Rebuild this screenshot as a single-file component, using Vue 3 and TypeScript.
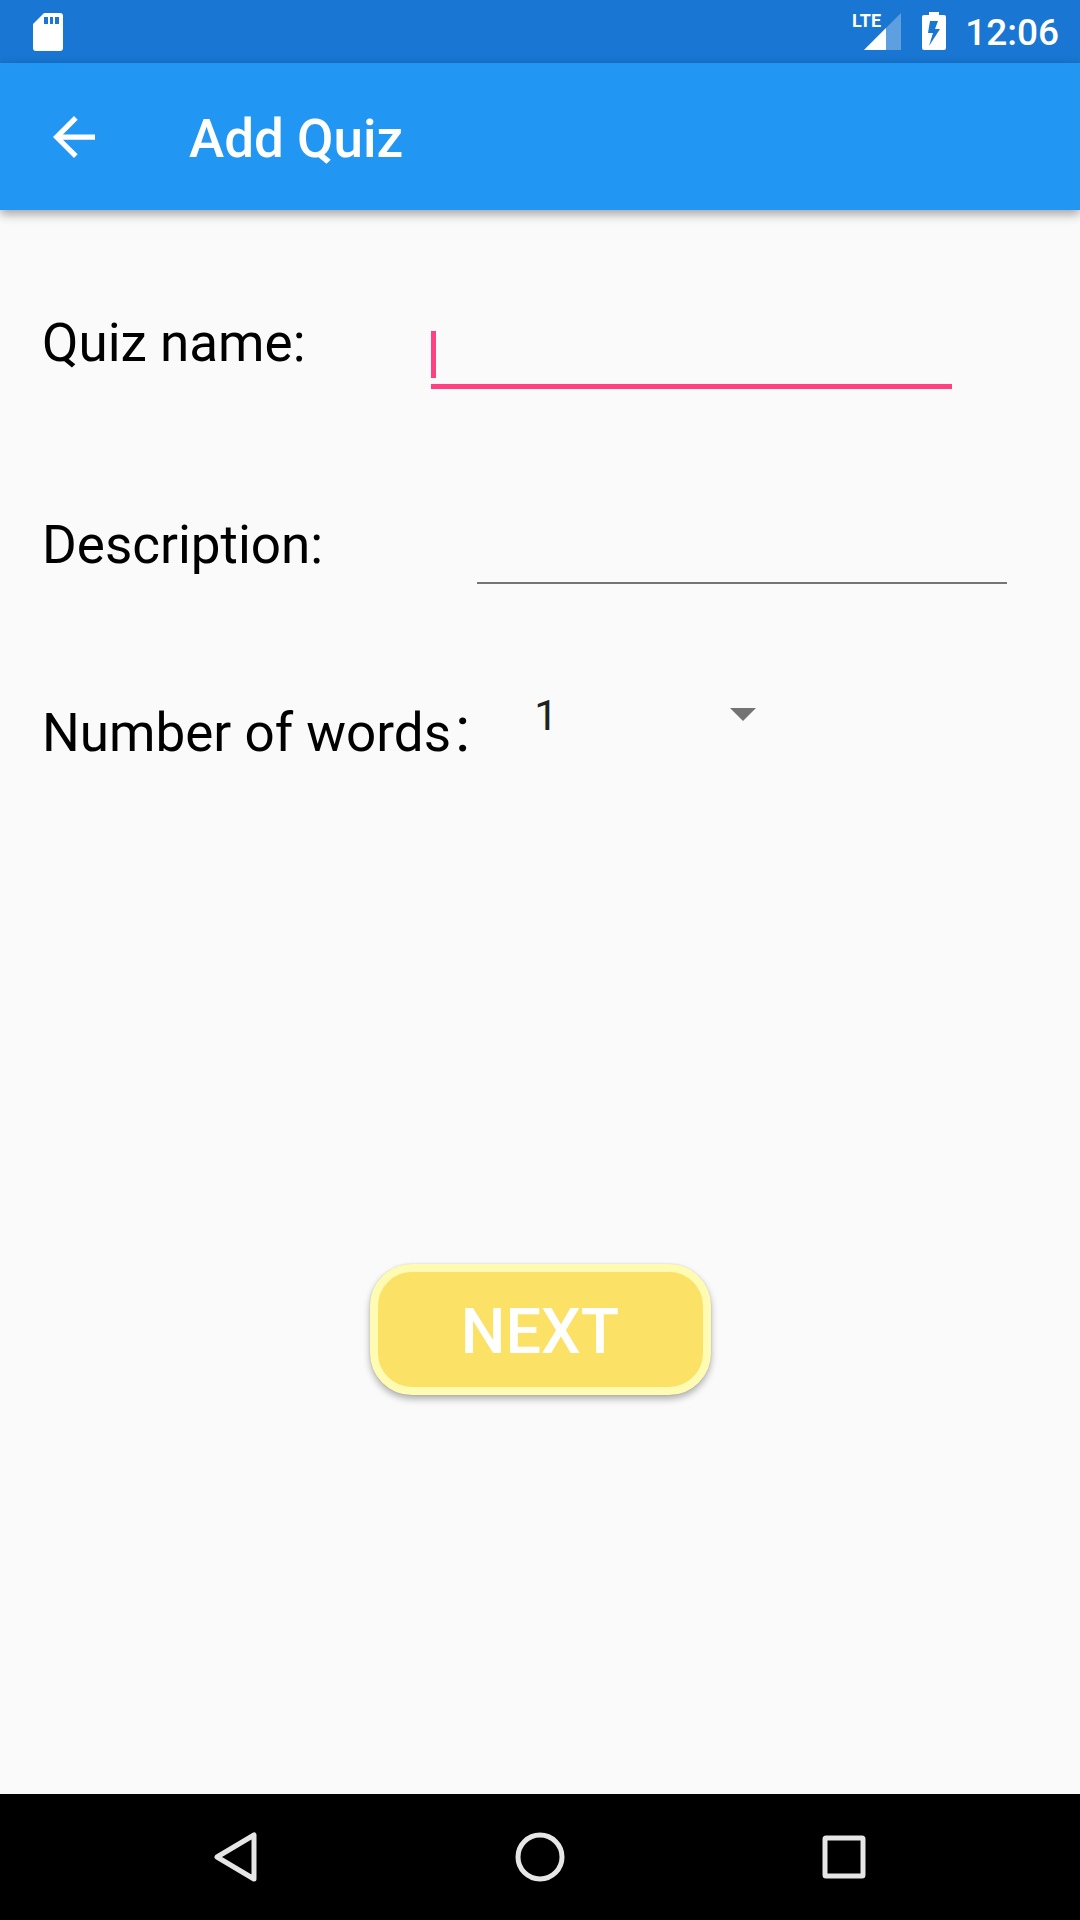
<script setup lang="ts">
import { ref } from 'vue'

const quizName = ref('')
const description = ref('')
const wordCount = ref(1)
const counts = [1, 2, 3, 4, 5, 6, 7, 8, 9, 10]
</script>

<template>
  <div class="screen">
    <div class="status">
      <svg class="sd" viewBox="0 0 32 40" aria-hidden="true">
        <path fill="#fff" fill-rule="evenodd" d="M12 1H28a3 3 0 0 1 3 3V36a3 3 0 0 1-3 3H4a3 3 0 0 1-3-3V12ZM12 5v7h4V5ZM18 5v7h3V5ZM23 5v7h4V5Z" />
      </svg>
      <div class="status-right">
        <div class="signal">
          <svg viewBox="0 0 37 37" aria-hidden="true">
            <path fill="#fff" fill-opacity=".3" d="M37 0V37H0Z" />
            <path fill="#fff" d="M22 15V37H0Z" />
          </svg>
          <span class="lte">LTE</span>
        </div>
        <svg class="battery" viewBox="0 0 24 38" aria-hidden="true">
          <path fill="#fff" fill-rule="evenodd" d="M7 0H17V3H22a2 2 0 0 1 2 2V36a2 2 0 0 1-2 2H2a2 2 0 0 1-2-2V5a2 2 0 0 1 2-2H7ZM8 9L6 21H11L7 34L18 17H13L16 9Z" />
        </svg>
        <time class="clock">12:06</time>
      </div>
    </div>

    <header class="appbar">
      <button class="back" type="button" aria-label="Back">
        <svg viewBox="0 0 16 16" aria-hidden="true">
          <path fill="#fff" d="M16 7H3.8L9.4 1.4 8 0 0 8 8 16 9.4 14.6 3.8 9H16Z" />
        </svg>
      </button>
      <h1>Add Quiz</h1>
    </header>

    <form class="form" @submit.prevent>
      <div class="row row-name">
        <label for="quiz-name">Quiz name:</label>
        <div class="field field-active">
          <input id="quiz-name" v-model="quizName" type="text" />
          <span class="caret"></span>
        </div>
      </div>
      <div class="row row-description">
        <label for="description">Description:</label>
        <div class="field">
          <input id="description" v-model="description" type="text" />
        </div>
      </div>
      <div class="row row-words">
        <label for="words">Number of words<span class="colon">:</span></label>
        <div class="picker">
          <select id="words" v-model="wordCount">
            <option v-for="n in counts" :key="n" :value="n">{{ n }}</option>
          </select>
          <svg class="arrow" viewBox="0 0 26 13" aria-hidden="true"><path fill="#737373" d="M0 0H26L13 13Z" /></svg>
        </div>
      </div>
      <button class="next" type="submit">NEXT</button>
    </form>

    <nav class="navbar">
      <button type="button" aria-label="Back">
        <svg viewBox="0 0 54 54" aria-hidden="true"><path d="M45 5V49L8 27Z" /></svg>
      </button>
      <button type="button" aria-label="Home">
        <svg viewBox="0 0 54 54" aria-hidden="true"><circle cx="27" cy="27" r="22" /></svg>
      </button>
      <button type="button" aria-label="Recent apps">
        <svg viewBox="0 0 54 54" aria-hidden="true"><rect x="8" y="8" width="38" height="38" rx="1" /></svg>
      </button>
    </nav>
  </div>
</template>

<style>
body {
  background: #fafafa;
}
</style>

<style scoped>
.screen {
  display: flex;
  flex-direction: column;
  min-height: 100vh;
  background: #fafafa;
  font-family: Roboto, "Liberation Sans", sans-serif;
  color: #000;
}

svg {
  display: block;
}

button {
  padding: 0;
  border: 0;
  background: none;
  font-family: inherit;
}

.status {
  display: flex;
  justify-content: space-between;
  height: 63px;
  padding: 0 21px 0 32px;
  background: #1976d2;
  color: #fff;
}

.sd {
  width: 32px;
  height: 40px;
  margin-top: 12px;
}

.status-right {
  display: flex;
}

.signal {
  position: relative;
  margin-top: 13px;
}

.signal svg {
  width: 37px;
  height: 37px;
}

.lte {
  position: absolute;
  top: 0;
  right: 20px;
  font-family: "Liberation Sans Narrow", Roboto, sans-serif;
  font-size: 18px;
  font-weight: 700;
  line-height: 16px;
}

.battery {
  width: 24px;
  height: 38px;
  margin: 12px 19px 0 21px;
}

.clock {
  font-size: 37px;
  font-weight: 500;
  line-height: 66px;
}

.appbar {
  display: flex;
  align-items: center;
  height: 147px;
  padding-left: 53px;
  background: #2196f3;
  color: #fff;
  box-shadow: 0 4px 10px rgba(0, 0, 0, 0.36);
}

.back svg {
  width: 42px;
  height: 42px;
}

h1 {
  margin: 4px 0 0 94px;
  font-size: 53px;
  font-weight: 500;
  line-height: 62px;
}

.form {
  display: flex;
  flex: 1;
  flex-direction: column;
  padding: 72px 42px 0;
}

.row {
  display: flex;
  align-items: flex-start;
  justify-content: space-between;
}

.row-name {
  height: 202px;
  padding-right: 86px;
}

.row-description {
  height: 188px;
  padding-right: 31px;
}

.row-words {
  height: 592px;
  justify-content: flex-start;
}

label {
  padding-top: 30px;
  font-size: 53px;
  line-height: 62px;
  white-space: nowrap;
}

.colon {
  margin-left: 4px;
  font-size: 63px;
  line-height: 0;
}

.field {
  position: relative;
  width: 530px;
  margin-top: 12px;
}

.field input {
  box-sizing: border-box;
  display: block;
  width: 100%;
  height: 88px;
  padding: 0;
  border: 0;
  border-bottom: 2px solid #757575;
  outline: 0;
  background: none;
  color: #212121;
  font: 42px Roboto, sans-serif;
}

.field-active {
  width: 521px;
}

.field-active input {
  height: 95px;
  border-bottom: 5px solid #ff4081;
  caret-color: transparent;
}

.caret {
  position: absolute;
  left: 0;
  bottom: 11px;
  width: 5px;
  height: 47px;
  background: #ff4081;
}

.picker {
  position: relative;
  width: 222px;
  margin: 19px 0 0 64px;
}

.picker select {
  width: 100%;
  height: 50px;
  padding: 0;
  border: 0;
  appearance: none;
  background: none;
  color: #212121;
  font: 42px/50px Roboto, sans-serif;
}

.arrow {
  position: absolute;
  top: 17px;
  right: 0;
  width: 26px;
  height: 13px;
  pointer-events: none;
}

.next {
  align-self: center;
  box-sizing: border-box;
  width: 341px;
  height: 131px;
  padding-top: 4px;
  border: 8px solid #fffbb3;
  border-radius: 42px;
  background: #fbe165;
  box-shadow: 0 4px 7px rgba(0, 0, 0, 0.3), 0 0 2px rgba(0, 0, 0, 0.14);
  color: #fff;
  font-size: 63px;
  font-weight: 500;
  line-height: 74px;
}

.navbar {
  display: flex;
  justify-content: center;
  gap: 250px;
  height: 126px;
  background: #000;
}

.navbar svg {
  width: 54px;
  height: 54px;
  fill: none;
  stroke: #e6e6e6;
  stroke-width: 5;
  stroke-linejoin: round;
}
</style>
